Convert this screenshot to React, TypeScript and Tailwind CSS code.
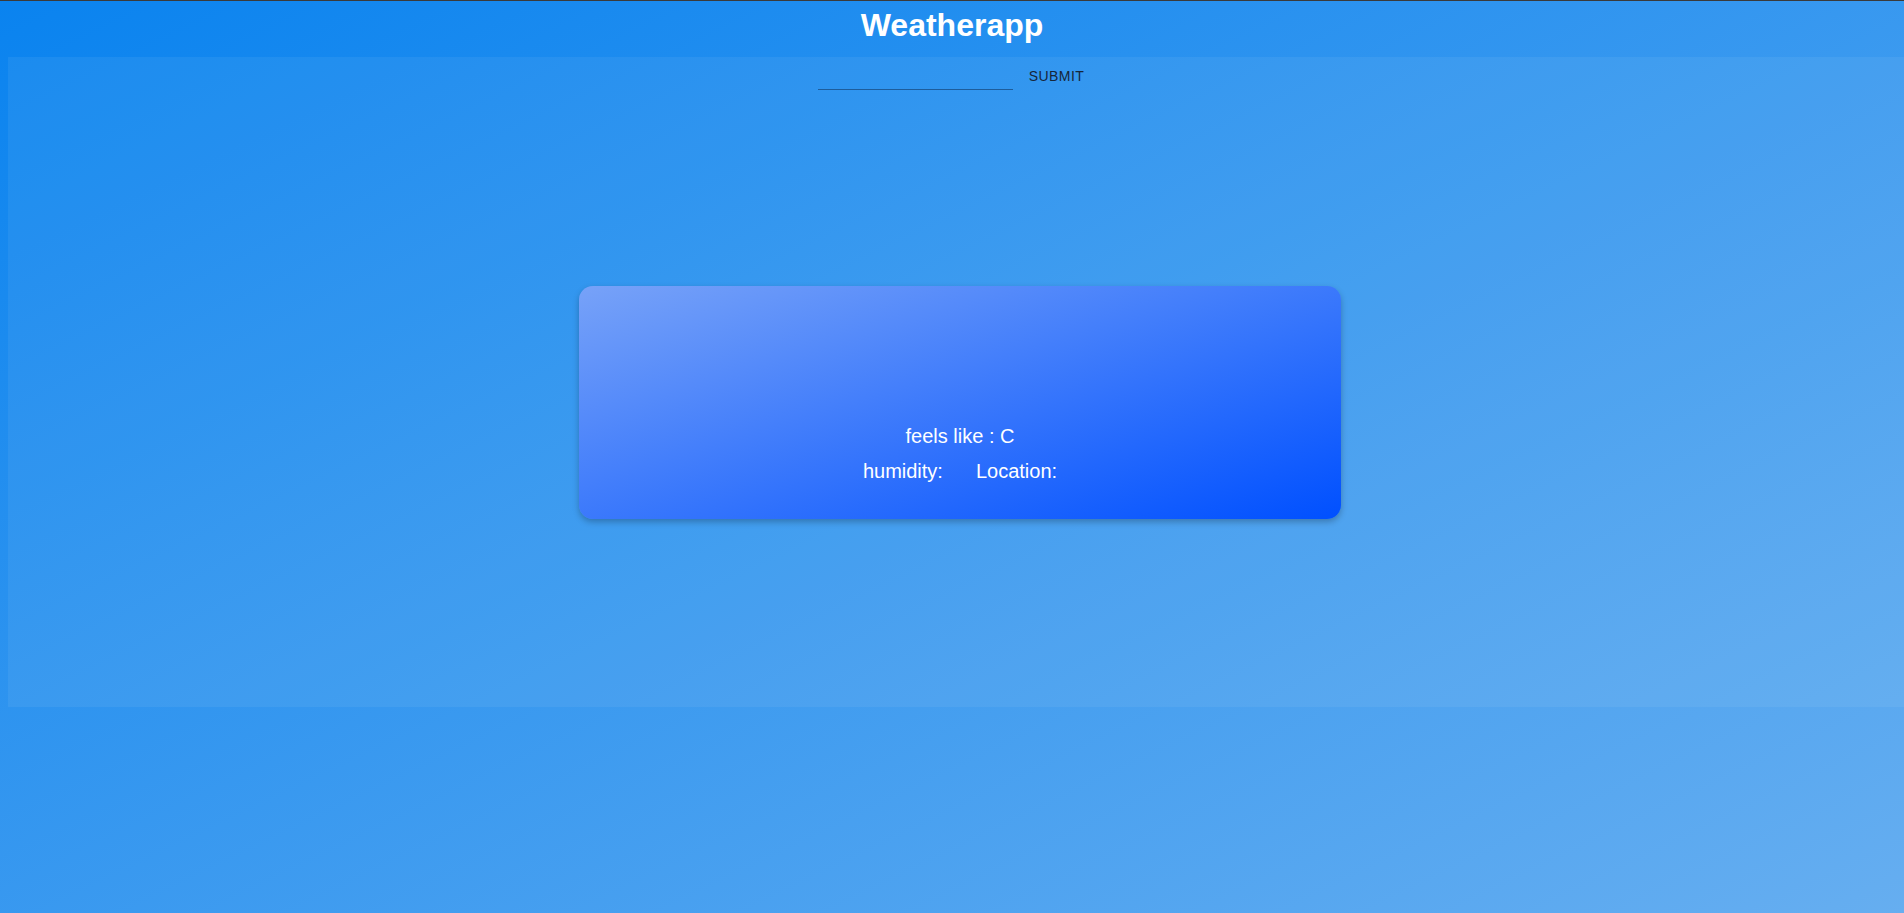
import React from "react";

function SearchForm() {
  return (
    <form
      className="flex h-[40px] items-start justify-center gap-[8px] pr-[10px] pt-[1px]"
      onSubmit={(e) => e.preventDefault()}
    >
      <div className="flex h-[32px] w-[195px] items-end border-b border-[#1d5d9c]">
        <input
          type="text"
          aria-label="city"
          className="h-full w-full bg-transparent px-0 text-[16px] text-black/90 outline-none"
        />
      </div>
      <button
        type="submit"
        className="rounded px-[8px] py-[6px] text-[14px] leading-[24.5px] tracking-[0.4px] text-[#16263a] uppercase"
      >
        Submit
      </button>
    </form>
  );
}

function WeatherCard() {
  return (
    <div className="flex h-[233px] w-[762px] flex-col items-center justify-end rounded-[14px] bg-[linear-gradient(to_bottom_right,#77a2f8,#0050ff)] pb-[30px] text-[20px] leading-[35px] text-white shadow-[0_3px_6px_rgba(0,0,0,0.25)]">
      <p>feels like : C</p>
      <div className="flex justify-center gap-[33px]">
        <span>humidity:</span>
        <span>Location:</span>
      </div>
    </div>
  );
}

export default function App() {
  return (
    <div
      className="h-screen w-full overflow-hidden border-t border-[#3a3a3a] bg-[linear-gradient(to_bottom_right,#0a83ef,#66aef0)] pt-[6px]"
      style={{ fontFamily: '"Liberation Sans", Arial, sans-serif' }}
    >
      <h1 className="mb-[13px] text-center text-[32px] leading-[37px] font-bold text-white">
        Weatherapp
      </h1>
      <main className="ml-[8px] flex h-[650px] w-[1904px] flex-col bg-white/[0.06]">
        <SearchForm />
        <div className="flex flex-1 items-center justify-center">
          <WeatherCard />
        </div>
      </main>
    </div>
  );
}
